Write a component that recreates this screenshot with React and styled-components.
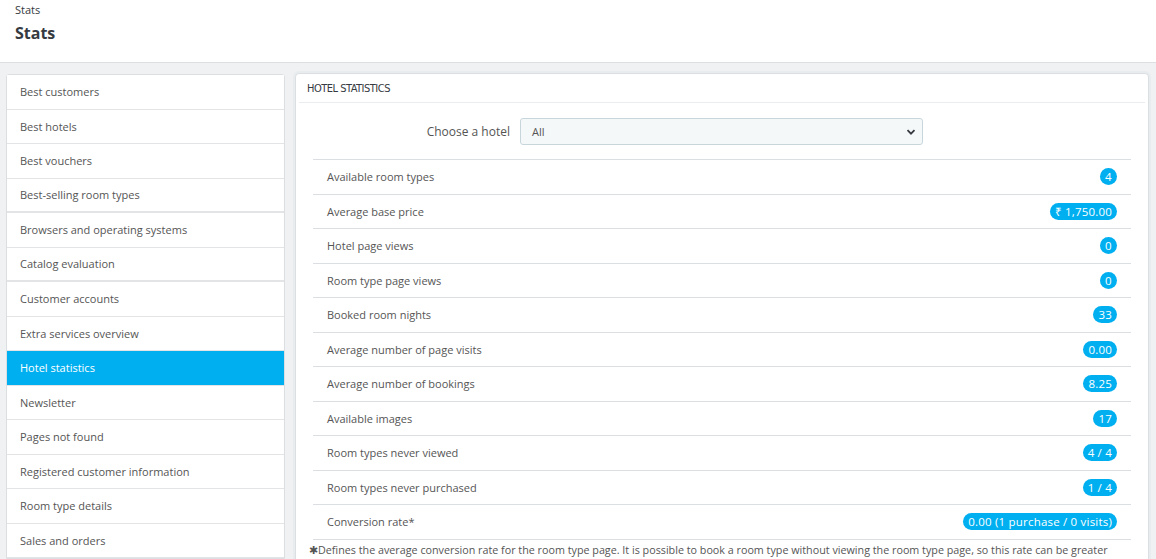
import styled, { createGlobalStyle } from "styled-components";

const GlobalStyle = createGlobalStyle`
  html, body {
    margin: 0;
    padding: 0;
    background: #eff1f2;
    font-family: "Open Sans", "Liberation Sans", sans-serif;
    color: #555;
    overflow: hidden;
  }
`;

const Page = styled.div`
  width: 1156px;
  height: 559px;
  overflow: hidden;
`;

const PageHead = styled.header`
  background: #fff;
  height: 63px;
  border-bottom: 1px solid #dcdfe1;
  padding: 0 15px;
  box-sizing: border-box;
`;

const Breadcrumb = styled.div`
  font-size: 11px;
  color: #363a41;
  padding-top: 2px;
  line-height: 15px;
`;

const Title = styled.h1`
  margin: 5px 0 0;
  font-size: 16px;
  font-weight: 700;
  color: #363a41;
  line-height: 22px;
`;

const Body = styled.div`
  display: flex;
  align-items: flex-start;
  gap: 10px;
  padding: 10px 7px 0 6px;
`;

const SideList = styled.nav`
  width: 279px;
  box-sizing: border-box;
  flex: none;
  background: #fff;
  border: 1px solid #dcdfe1;
  border-radius: 3px 3px 0 0;
  margin-top: 1px;
`;

const SideItem = styled.div`
  height: 33.5px;
  display: flex;
  align-items: center;
  padding: 0 13px;
  font-size: 11px;
  border-bottom: 1px solid #e2e4e5;
  color: ${(p) => (p.active ? "#fff" : "#555")};
  background: ${(p) => (p.active ? "#00aff0" : "#fff")};
  ${(p) => (p.thick ? "border-bottom: 2px solid #e2e4e5; height: 32.5px;" : "")}
`;

const Panel = styled.section`
  flex: 1;
  min-width: 0;
  overflow: hidden;
  background: #fff;
  border: 1px solid #dcdfe1;
  border-radius: 4px;
  box-shadow: 0 0 0 2px #e9ecee;
  padding: 0 17px;
  min-height: 520px;
`;

const PanelHeading = styled.div`
  margin: 0 -14px;
  padding: 0 8px;
  height: 28px;
  display: flex;
  align-items: center;
  border-bottom: 1px solid #eaedef;
  font-family: "DejaVu Sans Condensed", "Liberation Sans Narrow", "Open Sans", sans-serif;
  font-size: 11px;
  letter-spacing: -0.5px;
  color: #363a41;
  text-transform: uppercase;
`;

const FormRow = styled.div`
  display: flex;
  align-items: center;
  gap: 10px;
  margin: 15px 0 14px;
`;

const FormLabel = styled.label`
  width: 197px;
  text-align: right;
  font-size: 12px;
  color: #555;
`;

const SelectBox = styled.div`
  width: 403px;
  height: 27px;
  box-sizing: border-box;
  background: #f5f8f9;
  border: 1px solid #c7d6db;
  border-radius: 3px;
  display: flex;
  align-items: center;
  justify-content: space-between;
  padding: 0 6px 0 11px;
  font-size: 11px;
  color: #555;
`;

const Table = styled.div`
  border-top: 1px solid #dcdfe1;
`;

const Row = styled.div`
  height: 33.5px;
  display: flex;
  align-items: center;
  justify-content: space-between;
  border-bottom: 1px solid #dcdfe1;
  padding: 0 14px;
  font-size: 11px;
  color: #555;
`;

const Badge = styled.span`
  background: #00aff0;
  color: #fff;
  font-size: 11.5px;
  line-height: 17px;
  min-width: 17px;
  height: 17px;
  box-sizing: border-box;
  padding: 0 5px;
  border-radius: 9px;
  text-align: center;
  letter-spacing: 0.2px;
  ${(p) => (p.round ? "padding: 0;" : "")}
`;

const Note = styled.p`
  margin: 2px 0 0 -4px;
  font-size: 10.75px;
  line-height: 16px;
  color: #555;
`;

const Chevron = () => (
  <svg width="10" height="10" viewBox="0 0 10 10">
    <path d="M1.5 3.2 L5 6.7 L8.5 3.2" fill="none" stroke="#363a41" strokeWidth="1.8" />
  </svg>
);

const menu = [
  "Best customers",
  "Best hotels",
  "Best vouchers",
  "Best-selling room types",
  "Browsers and operating systems",
  "Catalog evaluation",
  "Customer accounts",
  "Extra services overview",
  "Hotel statistics",
  "Newsletter",
  "Pages not found",
  "Registered customer information",
  "Room type details",
  "Sales and orders",
];

const stats = [
  ["Available room types", "4"],
  ["Average base price", "₹ 1,750.00"],
  ["Hotel page views", "0"],
  ["Room type page views", "0"],
  ["Booked room nights", "33"],
  ["Average number of page visits", "0.00"],
  ["Average number of bookings", "8.25"],
  ["Available images", "17"],
  ["Room types never viewed", "4 / 4"],
  ["Room types never purchased", "1 / 4"],
  ["Conversion rate*", "0.00 (1 purchase / 0 visits)"],
];

export default function App() {
  return (
    <Page>
      <GlobalStyle />
      <PageHead>
        <Breadcrumb>Stats</Breadcrumb>
        <Title>Stats</Title>
      </PageHead>
      <Body>
        <SideList>
          {menu.map((m, i) => (
            <SideItem key={m} active={m === "Hotel statistics"} thick={i === 3 || i === 5}>
              {m}
            </SideItem>
          ))}
        </SideList>
        <Panel>
          <PanelHeading>Hotel statistics</PanelHeading>
          <FormRow>
            <FormLabel>Choose a hotel</FormLabel>
            <SelectBox>
              All
              <Chevron />
            </SelectBox>
          </FormRow>
          <Table>
            {stats.map(([label, value]) => (
              <Row key={label}>
                {label}
                <Badge round={value.length === 1}>{value}</Badge>
              </Row>
            ))}
          </Table>
          <Note>
            ✱Defines the average conversion rate for the room type page. It is possible to book a room type without viewing the room type page, so this rate can be greater than 1.
          </Note>
        </Panel>
      </Body>
    </Page>
  );
}
